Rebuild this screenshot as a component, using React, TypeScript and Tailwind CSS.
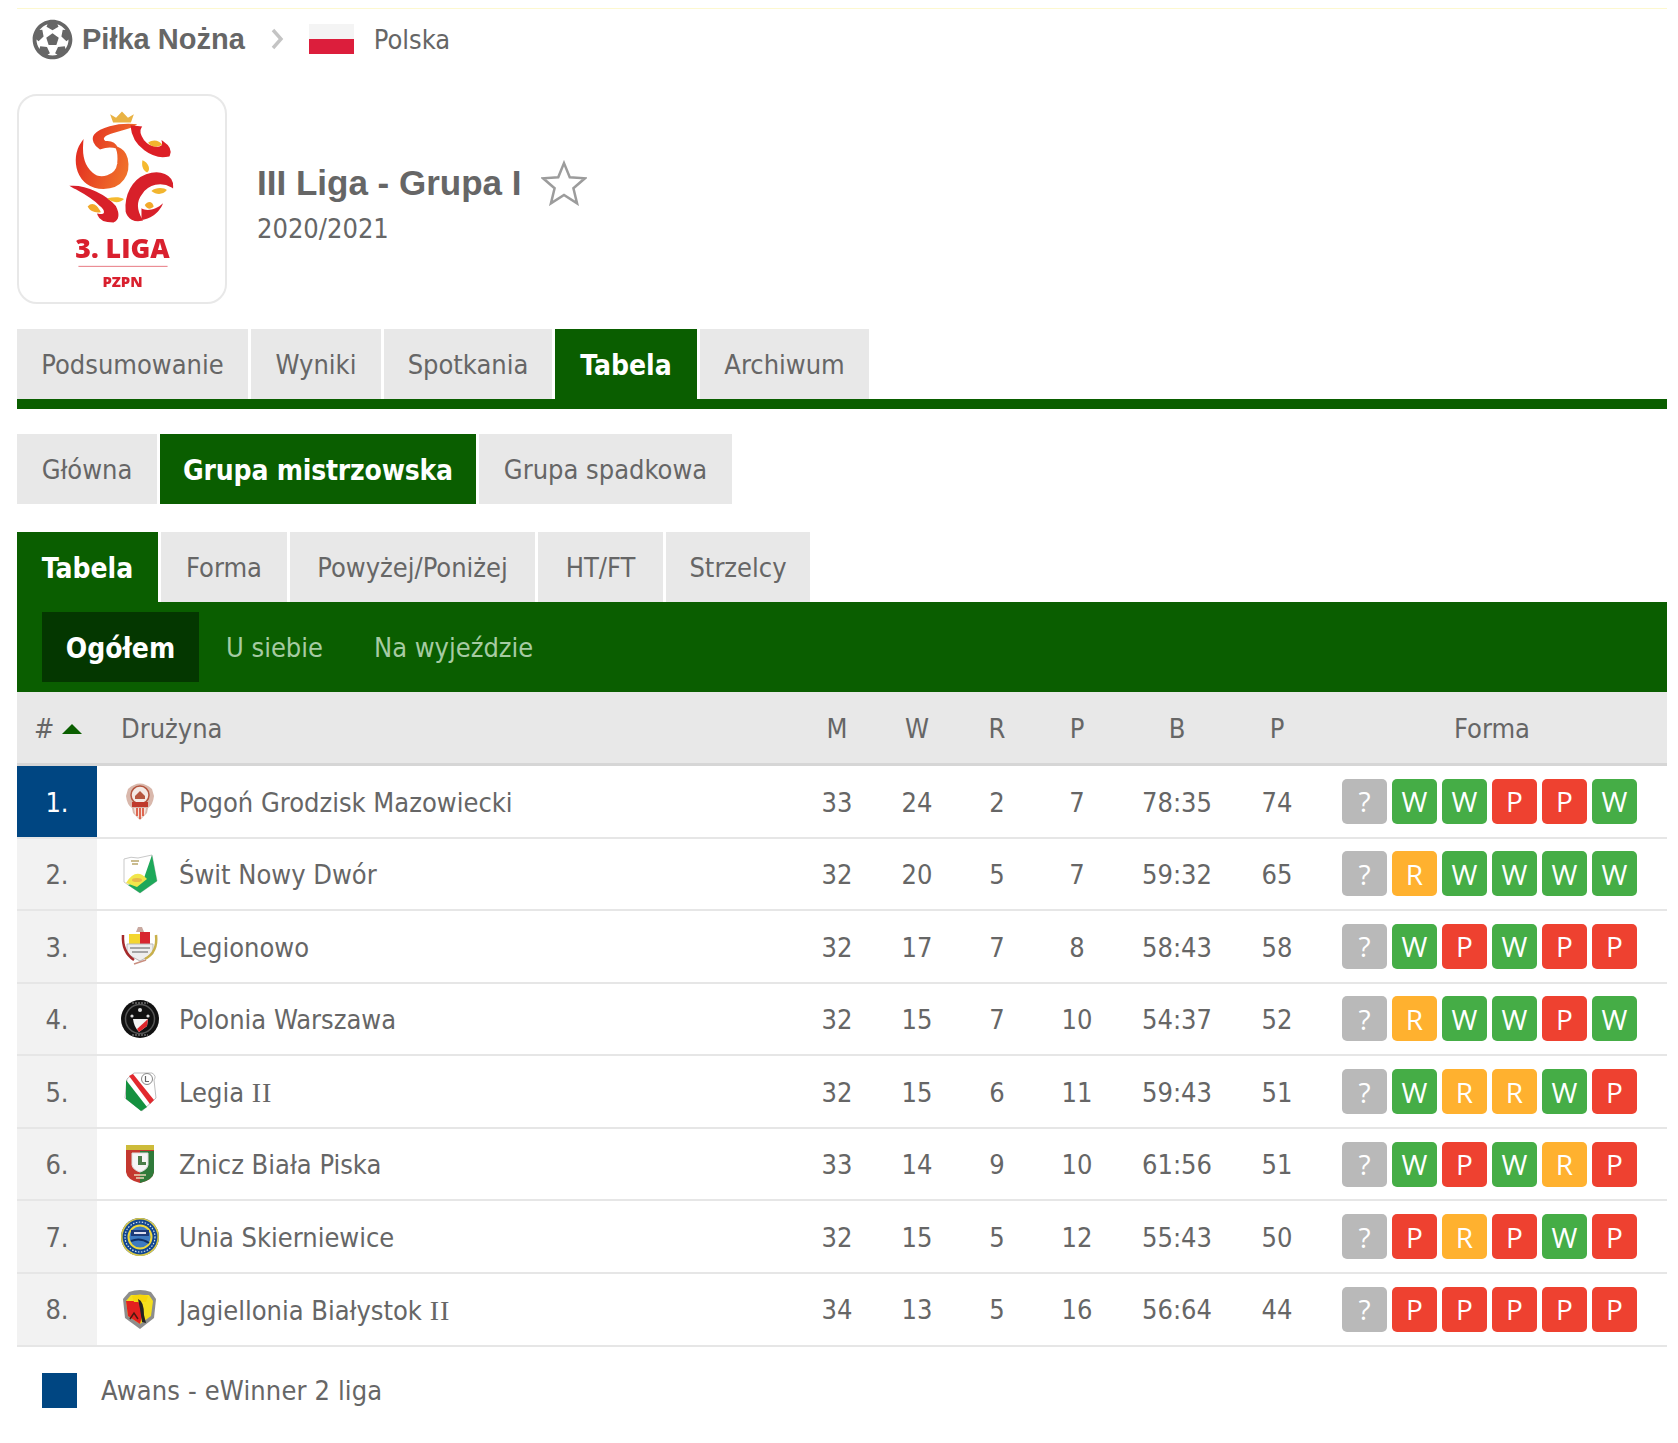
import React from "react";
import { FaFutbol } from "react-icons/fa";

const rows: [string, string, number, number, number, number, string, number, string][] = [
  ["1.", "Pogoń Grodzisk Mazowiecki", 33, 24, 2, 7, "78:35", 74, "?WWPPW"],
  ["2.", "Świt Nowy Dwór", 32, 20, 5, 7, "59:32", 65, "?RWWWW"],
  ["3.", "Legionowo", 32, 17, 7, 8, "58:43", 58, "?WPWPP"],
  ["4.", "Polonia Warszawa", 32, 15, 7, 10, "54:37", 52, "?RWWPW"],
  ["5.", "Legia II", 32, 15, 6, 11, "59:43", 51, "?WRRWP"],
  ["6.", "Znicz Biała Piska", 33, 14, 9, 10, "61:56", 51, "?WPWRP"],
  ["7.", "Unia Skierniewice", 32, 15, 5, 12, "55:43", 50, "?PRPWP"],
  ["8.", "Jagiellonia Białystok II", 34, 13, 5, 16, "56:64", 44, "?PPPPP"],
];

function Badge({ c }: { c: string }) {
  const bg = c === "?" ? "bg-[#b9b9b9]" : c === "W" ? "bg-[#45ad46]" : c === "P" ? "bg-[#ee4130]" : "bg-[#ffb12f]";
  return (
    <span className={`${bg} w-[45px] h-[45px] rounded-[5px] flex items-center justify-center text-white text-[28px] font-['Open_Sans',sans-serif]`}>
      {c}
    </span>
  );
}

function Crest({ i }: { i: number }) {
  const cls = "w-[40px] h-[40px]";
  switch (i) {
    case 0:
      return (
        <svg viewBox="0 0 40 40" className={cls}>
          <path d="M8 8 Q20 -3 32 8 L34 15 Q33 24 28 27 L27 32 L20 39 L13 32 L12 27 Q7 24 6 15Z" fill="#d9b8ac" />
          <circle cx="20" cy="14" r="9" fill="#f4e9e4" stroke="#b5563f" strokeWidth="1.5" />
          <rect x="12" y="21" width="16" height="5" fill="#c0392b" />
          <path d="M14 27 L26 27 L25 33 L20 38 L15 33Z" fill="#f5e3dc" />
          <path d="M17 27 V35 M20 27 V38 M23 27 V35" stroke="#d9482f" strokeWidth="1.6" />
          <path d="M15 15 L20 10 L25 15 V18 H15Z" fill="#b5563f" />
        </svg>
      );
    case 1:
      return (
        <svg viewBox="0 0 40 40" className={cls}>
          <path d="M4 5 Q11 2 18 4 L32 1 L37 27 L20 39 L4 28Z" fill="#fff" stroke="#c9c9c9" strokeWidth="1" />
          <path d="M32 1 L37 27 L20 39 L8 31 L24 24Z" fill="#1ea85a" />
          <path d="M6 29 Q16 13 27 25 L17 33Z" fill="#f1e64b" />
          <ellipse cx="17" cy="26" rx="5" ry="2" fill="#e8b84a" />
          <path d="M11 7 H19 M12 10 H18" stroke="#b9a66b" strokeWidth="1.5" />
        </svg>
      );
    case 2:
      return (
        <svg viewBox="0 0 40 40" className={cls}>
          <path d="M18 1 L22 1 L24 6 L16 6Z" fill="#c9a9a0" />
          <path d="M9 8 H20 V18 H9Z" fill="#f4d62f" />
          <path d="M20 6 H30 V18 H20Z" fill="#d8252f" />
          <path d="M7 18 H33 V28 L20 35 L7 28Z" fill="#eee" stroke="#b9b9b9" />
          <path d="M3 9 Q2 26 14 34" fill="none" stroke="#a5292a" strokeWidth="2.5" />
          <path d="M36 9 Q38 26 25 33" fill="none" stroke="#c9b04a" strokeWidth="2.5" />
          <path d="M10 22 H30 M12 26 H28" stroke="#8d8d8d" strokeWidth="1.5" />
          <path d="M14 38 L26 34" stroke="#c98f80" strokeWidth="1.5" />
        </svg>
      );
    case 3:
      return (
        <svg viewBox="0 0 40 40" className={cls}>
          <circle cx="20" cy="20" r="19" fill="#111" />
          <circle cx="20" cy="20" r="14.5" fill="none" stroke="#555" strokeWidth="1.5" />
          <path d="M13 20 H28 L27 27 L19 33 Q14 28 13 20Z" fill="#f3f3f3" />
          <path d="M28 20 L27 27 L19 33 L17 30Z" fill="#e0252b" />
          <circle cx="12" cy="17" r="1.6" fill="#ddd" />
          <circle cx="28" cy="17" r="1.6" fill="#ddd" />
          <circle cx="20" cy="11" r="2" fill="#ddd" />
          <path d="M12 4 H28 M12 36 H28" stroke="#999" strokeWidth="1.2" strokeDasharray="2 1" />
        </svg>
      );
    case 4:
      return (
        <svg viewBox="0 0 40 40" className={cls}>
          <path d="M7 7 L14 1 L32 1 Q37 4 34 8 L36 26 L22 39 L5 26Z" fill="#fff" stroke="#bdbdbd" />
          <path d="M6 8 L27 35 L21 39 L6 27Z" fill="#14913f" />
          <path d="M9 4 L13 2 L34 28 L30 32Z" fill="#e2292e" />
          <circle cx="27" cy="7" r="5.5" fill="#fff" stroke="#888" />
          <path d="M25.5 4 V9.5 H29" fill="none" stroke="#666" strokeWidth="1.2" />
        </svg>
      );
    case 5:
      return (
        <svg viewBox="0 0 40 40" className={cls}>
          <path d="M6 1 H34 V28 Q33 36 20 39 Q7 36 6 28Z" fill="#c4382f" />
          <path d="M20 7 H34 V28 Q33 36 20 39Z" fill="#2f7a3a" />
          <rect x="6" y="1" width="28" height="5" fill="#cdbb3a" />
          <path d="M12 9 H28 V21 Q27 26 20 28 Q13 26 12 21Z" fill="#f5f5f5" stroke="#ddd" />
          <path d="M18 12 H22 V18 H26 V21 H18Z" fill="#4a7d4a" />
          <path d="M14 31 H26 M16 34 H24" stroke="#e6d7b8" strokeWidth="1.5" />
        </svg>
      );
    case 6:
      return (
        <svg viewBox="0 0 40 40" className={cls}>
          <circle cx="20" cy="20" r="19" fill="#12468f" />
          <circle cx="20" cy="20" r="18.2" fill="none" stroke="#d9c949" strokeWidth="1.6" />
          <circle cx="20" cy="20" r="11.5" fill="#3e7ac0" stroke="#f0d93a" strokeWidth="2" />
          <rect x="11" y="13" width="18" height="6" fill="#1c3a78" />
          <path d="M14 16 H26" stroke="#dde" strokeWidth="2" />
          <path d="M11 24 Q20 20 29 26" stroke="#0e2f66" strokeWidth="2" fill="none" />
          <circle cx="20" cy="20" r="15" fill="none" stroke="#cfe0f0" strokeWidth="1.2" strokeDasharray="1.5 1.5" />
        </svg>
      );
    default:
      return (
        <svg viewBox="0 0 40 40" className={cls}>
          <path d="M9 3 Q20 -1 31 3 L36 10 L34 29 L20 40 L5 29 L3 10Z" fill="#8d8d8d" />
          <path d="M11 6 H29 L33 12 L31 27 L20 35 L8 27 L6 12Z" fill="#f4df1f" />
          <path d="M6 12 L18 12 L23 24 L20 35 L8 27Z" fill="#e3201f" />
          <path d="M12 7 Q20 4 28 7 L26 13 L14 13Z" fill="#f6d60b" />
          <path d="M18 10 Q24 12 24 26 L26 34 L22 33 L20 20Z" fill="#222" />
          <path d="M10 30 L14 24 L18 30" stroke="#4a1a10" strokeWidth="1.5" fill="none" />
        </svg>
      );
  }
}

function Logo() {
  return (
    <svg viewBox="18 95 208 208" className="w-[206px] h-[206px]">
      <defs>
        <linearGradient id="o" x1="0" y1="0" x2="1" y2="0.4">
          <stop offset="0" stopColor="#e0231f" />
          <stop offset="1" stopColor="#f0702a" />
        </linearGradient>
      </defs>
      <g transform="translate(50 95) scale(0.3333)" style={{ filter: "blur(1.5px)" }}>
        <path d="M180 55 L198 66 L216 47 L234 66 L252 55 L243 80 L189 80Z" fill="#e9b344" />
        <path d="M95 143 C62 190 80 278 160 278 C215 278 240 235 230 190 C222 155 185 145 150 158 C135 150 125 130 135 118 C150 100 200 84 252 88 C235 100 185 105 165 118 C155 125 155 135 165 140 C205 135 208 175 205 205 C200 245 150 258 125 235 C100 215 92 180 95 143Z" fill="url(#o)" stroke="url(#o)" strokeWidth="7" />
        <path d="M245 92 C250 150 310 192 358 180 C365 165 355 150 340 140 C345 165 300 160 280 135 C270 120 265 105 272 95Z" fill="#dd1f26" stroke="#dd1f26" strokeWidth="6" />
        <path d="M368 275 C370 240 330 225 290 240 C250 255 225 300 230 350 C235 370 255 380 275 375 C260 350 255 320 275 295 C295 265 335 255 368 275Z" fill="#d8202a" stroke="#d8202a" strokeWidth="6" />
        <path d="M68 275 C110 275 165 300 195 335 C205 355 205 372 190 380 C170 380 150 375 145 360 C170 365 170 345 150 330 C125 305 95 290 68 275Z" fill="#d8202a" stroke="#d8202a" strokeWidth="6" />
        <path d="M275 375 C305 375 335 345 340 325 C320 345 290 350 275 340Z" fill="#d8202a" />
        <path d="M295 142 C310 130 330 135 338 148 C320 158 305 155 295 142Z" fill="#f2b52e" />
        <path d="M278 195 C295 200 305 225 292 232 C278 225 275 210 278 195Z" fill="#f5b92e" />
        <path d="M305 288 C320 275 345 278 352 285 C340 300 320 300 305 288Z" fill="#f2b52e" />
        <path d="M172 310 C190 305 210 305 222 312 C212 325 185 325 172 310Z" fill="#f5b92e" />
        <path d="M112 335 C125 320 140 328 152 352 C135 355 120 350 112 335Z" fill="#f2a92a" />
        <path d="M285 330 C295 315 310 320 312 335 C302 345 292 343 285 330Z" fill="#f2a92a" />
      </g>
      <g fill="#d9202e" fontFamily="'Open Sans',sans-serif" fontWeight="800" textAnchor="middle" style={{ filter: "blur(0.6px)" }}>
        <text x="122.5" y="258.5" fontSize="27">3. LIGA</text>
        <rect x="78" y="266.5" width="90" height="1" opacity="0.6" />
        <text x="122.5" y="288" fontSize="15">PZPN</text>
      </g>
    </svg>
  );
}

const base = "font-['DejaVu_Sans_Condensed','DejaVu_Sans',sans-serif]";

function Tab({ label, active, w, tight }: { label: string; active?: boolean; w: string; tight?: boolean }) {
  return (
    <div className={`${w} h-[70px] pt-[3px] flex items-center justify-center ${tight ? "tracking-[-0.2px]" : ""} ${active ? "bg-[#0a5e00] text-white font-bold text-[28px]" : "bg-[#e8e8e8] text-[#666] text-[27px]"}`}>
      {label}
    </div>
  );
}

function TeamName({ name }: { name: string }) {
  if (name.endsWith(" II")) {
    return (
      <span className="ml-[19px]">
        {name.slice(0, -2)}
        <span className="font-['Liberation_Serif',serif] text-[28px] tracking-[1px]">II</span>
      </span>
    );
  }
  return <span className="ml-[19px]">{name}</span>;
}

export default function App() {
  return (
    <div className={`${base} bg-white text-[#666] w-[1678px] h-[1443px] pl-[17px] pr-[11px] pt-[8px]`}>
      <div className="h-[1px] bg-[#fdf8cf]" />
      <div className="h-[60px] flex items-center">
        <FaFutbol className="text-[#666] w-[41px] h-[41px] ml-[15px]" />
        <span className="ml-[9px] pt-[2px] font-['Liberation_Sans',sans-serif] font-bold text-[29px]">Piłka Nożna</span>
        <svg viewBox="0 0 14 22" className="w-[14px] h-[22px] ml-[25px]">
          <path d="M3 2 L11 11 L3 20" fill="none" stroke="#c4c4c4" strokeWidth="3.4" />
        </svg>
        <span className="ml-[25px] w-[45px] h-[30px] flex flex-col">
          <span className="h-[15px] bg-[#f4f4f4]" />
          <span className="h-[15px] bg-[#dc1e3c]" />
        </span>
        <span className="ml-[20px] pt-[2px] text-[27px]">Polska</span>
      </div>

      <div className="mt-[25px] flex items-center h-[210px]">
        <div className="w-[210px] h-[210px] rounded-[20px] border-2 border-[#e8e8e8] flex items-center justify-center">
          <Logo />
        </div>
        <div className="ml-[30px] mt-[8px]">
          <div className="flex items-center">
            <span className="font-['Liberation_Sans',sans-serif] font-bold text-[35px] leading-[48px]">III Liga - Grupa I</span>
            <svg viewBox="0 0 44 44" className="w-[46px] h-[46px] ml-[20px]">
              <path d="M22 3 L27.5 16.5 L42 17.5 L31 27 L34.5 41.5 L22 33.5 L9.5 41.5 L13 27 L2 17.5 L16.5 16.5Z" fill="#fff" stroke="#9c9c9c" strokeWidth="2.4" />
            </svg>
          </div>
          <div className="text-[27px] leading-[38px] mt-[3px]">2020/2021</div>
        </div>
      </div>

      <div className="mt-[25px] flex gap-[3px] border-b-[10px] border-[#0a5e00]">
        <Tab label="Podsumowanie" w="w-[231px]" />
        <Tab label="Wyniki" w="w-[130px]" />
        <Tab label="Spotkania" w="w-[168px]" />
        <Tab label="Tabela" active w="w-[142px]" />
        <Tab label="Archiwum" w="w-[169px]" />
      </div>

      <div className="mt-[25px] flex gap-[3px]">
        <Tab label="Główna" w="w-[140px]" />
        <Tab label="Grupa mistrzowska" active tight w="w-[316px]" />
        <Tab label="Grupa spadkowa" w="w-[253px]" />
      </div>

      <div className="mt-[28px] flex gap-[3px]">
        <Tab label="Tabela" active w="w-[141px]" />
        <Tab label="Forma" w="w-[126px]" />
        <Tab label="Powyżej/Poniżej" w="w-[245px]" />
        <Tab label="HT/FT" w="w-[125px]" />
        <Tab label="Strzelcy" w="w-[144px]" />
      </div>

      <div className="h-[90px] bg-[#0a5e00] pl-[25px] flex items-center text-[27px]">
        <div className="w-[157px] h-[70px] pt-[3px] bg-[#043700] text-white text-[28px] font-bold flex items-center justify-center">Ogółem</div>
        <span className="ml-[27px] pt-[3px] text-[#a6cba3]">U siebie</span>
        <span className="ml-[51px] pt-[3px] text-[#a6cba3]">Na wyjeździe</span>
      </div>

      <div className="grid grid-cols-[80px_1fr_80px_80px_80px_80px_120px_80px_350px] h-[71px] pt-[3px] bg-[#e8e8e8] text-[27px] items-center text-center">
        <div className="flex items-center pl-[17px] gap-[8px]">
          #
          <span className="w-0 h-0 border-x-[10px] border-x-transparent border-b-[10px] border-b-[#0a5e00]" />
        </div>
        <div className="text-left pl-[24px]">Drużyna</div>
        <div>M</div>
        <div>W</div>
        <div>R</div>
        <div>P</div>
        <div>B</div>
        <div>P</div>
        <div>Forma</div>
      </div>
      <div className="h-[3px] bg-[#d6d6d6]" />

      {rows.map((r, i) => (
        <div
          key={r[0]}
          className="grid grid-cols-[80px_1fr_80px_80px_80px_80px_120px_80px_350px] h-[72.57px] border-b-2 border-[#e6e6e6] text-[27px] items-center text-center first:h-[72px]"
        >
          <div className={`h-full pt-[3px] flex items-center justify-center ${i === 0 ? "bg-[#004682] text-white" : "bg-[#f2f2f2]"}`}>{r[0]}</div>
          <div className="flex items-center text-left pl-[23px]">
            <Crest i={i} />
            <span className="pt-[3px]"><TeamName name={r[1]} /></span>
          </div>
          <div className="pt-[3px]">{r[2]}</div>
          <div className="pt-[3px]">{r[3]}</div>
          <div className="pt-[3px]">{r[4]}</div>
          <div className="pt-[3px]">{r[5]}</div>
          <div className="pt-[3px]">{r[6]}</div>
          <div className="pt-[3px]">{r[7]}</div>
          <div className="flex gap-[5px] pl-[25px]">
            {r[8].split("").map((c, k) => (
              <Badge key={k} c={c} />
            ))}
          </div>
        </div>
      ))}

      <div className="mt-[24px] flex items-center pl-[25px]">
        <span className="w-[35px] h-[35px] bg-[#004682]" />
        <span className="ml-[24px] text-[27px] tracking-[0.15px]">Awans - eWinner 2 liga</span>
      </div>
    </div>
  );
}
